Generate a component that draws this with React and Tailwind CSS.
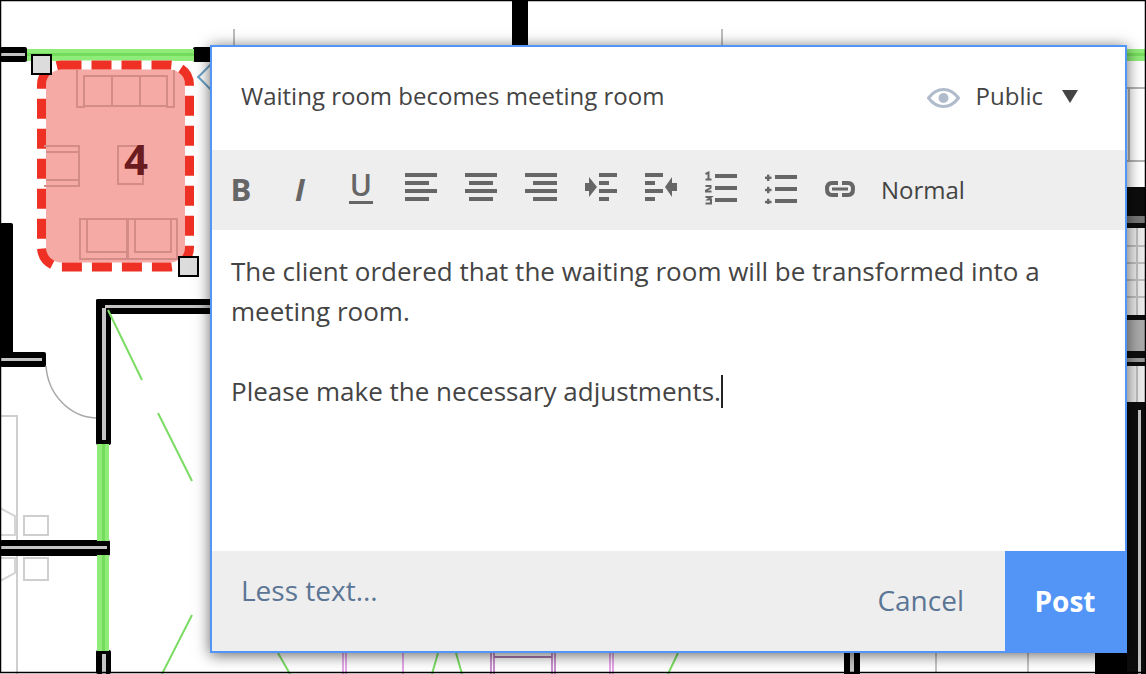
const FONT = "font-['Open_Sans',sans-serif]"

// Floor plan behind the popup
function FloorPlan() {
  return (
    <svg className="absolute inset-0" width="1146" height="674" viewBox="0 0 1146 674">
      <rect width="1146" height="674" fill="#fff" />

      {/* thin lines */}
      <g stroke="#a8a8a8" strokeWidth="1.5" fill="none">
        <path d="M234 29V47M722 29V47" />
        <path d="M46 366C48 395 70 417 96 418" />
        <path d="M1 416H17V674" stroke="#cfcfcf" strokeWidth="2" />
        <path d="M24 516H48V535H24ZM24 558H48V580H24Z" stroke="#cfcfcf" strokeWidth="2" />
        <path d="M0 508L15 516V535H0M0 581L15 573V558H0" stroke="#d5d5d5" strokeWidth="2" />
        <path d="M936 653V672M1028 653V672" stroke="#c4c4c4" strokeWidth="2" />
        <path d="M1127 88H1146M1127 161H1146M1129 88V161" stroke="#b4b4b4" strokeWidth="2" />
      </g>

      {/* walls */}
      <g fill="#000">
        <rect x="512" y="0" width="16" height="46" />
        <rect x="0" y="47" width="27" height="15" rx="2" />
        <rect x="193" y="47" width="20" height="15" rx="2" />
        <rect x="0" y="223" width="13" height="132" rx="2" />
        <rect x="0" y="352" width="46" height="15" rx="2" />
        <rect x="96" y="299" width="120" height="15" rx="2" />
        <rect x="96" y="299" width="15" height="146" rx="2" />
        <rect x="0" y="540" width="110" height="16" rx="2" />
        <rect x="96" y="650" width="15" height="24" rx="2" />
        <rect x="844" y="653" width="16" height="21" />
        <rect x="1095" y="640" width="51" height="34" />
        <rect x="1127" y="187" width="19" height="487" fill="#0d0d0d" />
      </g>
      <g fill="#c4c4c4">
        <rect x="0" y="53" width="25" height="3" />
        <rect x="0" y="358" width="42" height="3" />
        <rect x="105" y="305" width="110" height="3" />
        <rect x="102" y="308" width="4" height="132" />
        <rect x="0" y="546" width="107" height="3" />
        <rect x="102" y="654" width="4" height="20" />
        <rect x="850" y="653" width="4" height="20" />
        <rect x="1138" y="410" width="3" height="264" />
      </g>

      {/* windows */}
      <g fill="#8fec78">
        <rect x="27" y="49" width="167" height="12" />
        <rect x="1120" y="49" width="26" height="12" />
        <rect x="97" y="444" width="12" height="97" />
        <rect x="97" y="555" width="12" height="96" />
      </g>
      <g fill="#74dc5c">
        <rect x="27" y="53" width="167" height="3" />
        <rect x="1120" y="53" width="26" height="3" />
        <rect x="102" y="444" width="3" height="97" />
        <rect x="102" y="555" width="3" height="96" />
      </g>
      <g stroke="#7bdc63" strokeWidth="2" fill="none">
        <path d="M108 310L142 380M158 413L192 481M192 615L162 674" />
        <path d="M278 653L290 674M438 653L432 674M456 653L462 674M678 653L668 674" />
      </g>

      {/* right edge */}
      <rect x="1127" y="216" width="19" height="7" fill="#777" />
      <g fill="#eaeaea">
        <rect x="1127" y="228" width="19" height="87" />
        <rect x="1127" y="366" width="19" height="36" />
      </g>
      <g fill="#bdbdbd">
        <rect x="1127" y="245" width="19" height="2" />
        <rect x="1127" y="262" width="19" height="2" />
        <rect x="1127" y="279" width="19" height="2" />
        <rect x="1127" y="296" width="19" height="2" />
        <rect x="1136" y="228" width="2" height="87" />
        <rect x="1127" y="320" width="19" height="31" fill="#a9a9a9" />
        <rect x="1127" y="358" width="19" height="4" fill="#999" />
        <rect x="1136" y="366" width="2" height="36" />
      </g>

      {/* purple room at the bottom */}
      <g stroke="#e6a5ea" strokeWidth="2" fill="none">
        <path d="M343 653V674M346 653V674M403 653V674M610 653V674M613 653V674" />
        <path d="M491 653V674M494 653V674M552 653V674M555 653V674" stroke="#c98fcf" />
        <path d="M494 657H552" stroke="#a978ad" />
      </g>

      {/* highlighted area */}
      <rect x="41.5" y="65" width="148" height="202" rx="20" fill="#f6aaa5" stroke="#fff" strokeWidth="9" />
      <rect x="41.5" y="65" width="148" height="202" rx="20" fill="none" stroke="#ee3124" strokeWidth="9" strokeDasharray="20 10" />
      <g stroke="#d48c88" strokeWidth="2" fill="none">
        <path d="M77 70V107H84V76H167V107H174V70" />
        <path d="M84 106H167M112 76V106M140 76V106" />
        <path d="M44 146H79V186H44M46 152H79V180H46" />
        <path d="M118 146H143V184H118Z" />
        <path d="M80 219H127V259H80ZM87 219V252H127" />
        <path d="M128 219H177V259H128ZM135 219V252H171V219" />
      </g>
      <text x="136" y="175" textAnchor="middle" fontSize="42" fontWeight="700" fill="#6b1c20" fontFamily="'Open Sans', sans-serif">4</text>

      {/* resize handles */}
      <rect x="32" y="55" width="19" height="19" fill="#dcdcdc" stroke="#000" strokeWidth="2" />
      <rect x="179" y="257" width="19" height="19" fill="#dcdcdc" stroke="#000" strokeWidth="2" />

      {/* outer frame */}
      <rect x="0.500" y="0.500" width="1145" height="672" fill="none" stroke="#000" strokeWidth="1.500" />
    </svg>
  )
}

function LinesIcon({ rows }) {
  return (
    <svg width="32" height="32" viewBox="0 0 32 32" fill="#666">
      {rows.map(([x, w], i) => (
        <rect key={i} x={x} y={1 + i * 8} width={w} height="4" />
      ))}
    </svg>
  )
}

function IndentIcon() {
  return (
    <svg width="32" height="32" viewBox="0 0 32 32" fill="#666">
      <path d="M0 11H4V5L12 15L4 25V19H0Z" />
      <rect x="14" y="1" width="18" height="4" />
      <rect x="14" y="9" width="10" height="4" />
      <rect x="14" y="17" width="18" height="4" />
      <rect x="14" y="25" width="10" height="4" />
    </svg>
  )
}

function OutdentIcon() {
  return (
    <svg width="32" height="32" viewBox="0 0 32 32" fill="#666">
      <path d="M32 11H27V5L20 15L27 25V19H32Z" />
      <rect x="0" y="1" width="18" height="4" />
      <rect x="0" y="9" width="10" height="4" />
      <rect x="0" y="17" width="18" height="4" />
      <rect x="0" y="25" width="10" height="4" />
    </svg>
  )
}

function OrderedIcon() {
  return (
    <svg width="32" height="34" viewBox="0 0 32 34" fill="none" className="overflow-visible">
      <g stroke="#666" strokeWidth="2">
        <path d="M0.500 3L3.500 1.500V8M0.500 8.500H6.500" />
        <path d="M0.500 15H5.500V17L1 19.500V20.500H6.500" />
        <path d="M0.500 26H6L3 28.500H6V32.500H0.500" />
      </g>
      <g fill="#666">
        <rect x="10" y="3" width="22" height="4" />
        <rect x="10" y="15" width="22" height="4" />
        <rect x="10" y="27" width="22" height="4" />
      </g>
    </svg>
  )
}

function BulletIcon() {
  return (
    <svg width="32" height="32" viewBox="0 0 32 32" fill="#666">
      {[5.8, 18, 30].map((cy) => (
        <g key={cy}>
          <rect x="0" y={cy - 1.2} width="6.500" height="2.400" />
          <rect x="2" y={cy - 3.200} width="2.400" height="6.400" />
        </g>
      ))}
      <rect x="10" y="3" width="22" height="4" />
      <rect x="10" y="15" width="22" height="4" />
      <rect x="10" y="27" width="22" height="4" />
    </svg>
  )
}

function LinkIcon() {
  return (
    <svg width="32" height="32" viewBox="0 0 32 32" fill="none" stroke="#666" strokeWidth="4">
      <path d="M13 11H7C3.500 11 2 13 2 17C2 21 3.500 23 7 23H13" />
      <path d="M17 11H23C26.500 11 28 13 28 17C28 21 26.500 23 23 23H17" />
      <rect x="7" y="15.500" width="16" height="3" fill="#666" stroke="none" />
    </svg>
  )
}

const ALIGN_LEFT = [[0, 32], [0, 24], [0, 32], [0, 24]]
const ALIGN_CENTER = [[0, 32], [4, 24], [0, 32], [4, 24]]
const ALIGN_RIGHT = [[0, 32], [8, 24], [0, 32], [8, 24]]

function Toolbar() {
  const cell = 'w-8 h-8 flex items-center justify-center shrink-0'
  return (
    <div className="h-20 bg-[#eee] flex items-center gap-7 pl-[13px] pr-4 pb-1">
      <span className={`${cell} text-[#666] text-[31px] font-bold mt-[2px]`}>B</span>
      <span className={`${cell} text-[#666] text-[31px] font-bold italic mt-[2px] -translate-x-px`}>I</span>
      <span className={`${cell} flex-col -mt-[1px]`}>
        <span className="text-[#666] text-[30px] leading-[26px] font-semibold">U</span>
        <span className="w-6 h-1 bg-[#666] mt-[3px]" />
      </span>
      <span className={cell}><LinesIcon rows={ALIGN_LEFT} /></span>
      <span className={cell}><LinesIcon rows={ALIGN_CENTER} /></span>
      <span className={cell}><LinesIcon rows={ALIGN_RIGHT} /></span>
      <span className={cell}><IndentIcon /></span>
      <span className={cell}><OutdentIcon /></span>
      <span className={cell}><OrderedIcon /></span>
      <span className={cell}><BulletIcon /></span>
      <span className={cell}><LinkIcon /></span>
      <span className="text-[#444] text-[24px] -ml-1 mt-[3px]">Normal</span>
    </div>
  )
}

export default function App() {
  return (
    <div className={`relative w-[1146px] h-[674px] overflow-hidden bg-white ${FONT}`}>
      <FloorPlan />

      {/* callout arrow */}
      <div className="absolute left-[201px] top-[67px] w-5 h-5 rotate-45 bg-white border-l-2 border-b-2 border-[#6ba3c7]" />

      {/* popup */}
      <div className="absolute left-[210px] top-[45px] w-[917px] h-[608px] border-2 border-[#5295f7] bg-white flex flex-col shadow-[0_2px_14px_rgba(0,0,0,0.6)]">
        <div className="h-[103px] flex items-center justify-between pl-[29px] pr-[47px] pb-[5px] text-[#444] text-[24px]">
          <span>Waiting room becomes meeting room</span>
          <span className="flex items-center">
            <svg width="33" height="20" viewBox="0 0 33 20" className="mr-4 mt-[3px]">
              <path d="M1.500 10C6 4 11 1.500 16.500 1.500C22 1.500 27 4 31.500 10C27 16 22 18.500 16.500 18.500C11 18.500 6 16 1.500 10Z" fill="none" stroke="#b0bccb" strokeWidth="3" />
              <circle cx="16.500" cy="10" r="5" fill="#b0bccb" />
            </svg>
            Public
            <span className="ml-[19px] w-0 h-0 border-x-8 border-x-transparent border-t-[13px] border-t-[#444]" />
          </span>
        </div>

        <Toolbar />

        <div className="flex-1 px-[19px] pt-[21px] text-[#444] text-[26px] leading-[40px]">
          <p>The client ordered that the waiting room will be transformed into a meeting room.</p>
          <p className="mt-10 flex items-center">
            Please make the necessary adjustments.
            <span className="inline-block w-[2px] h-[33px] bg-[#222]" />
          </p>
        </div>

        <div className="h-[100px] bg-[#eee] flex text-[#5b7595] text-[28px]">
          <span className="pl-[29px] pt-[18px]">Less text...</span>
          <span className="ml-auto self-center pr-[41px] pb-[3px]">Cancel</span>
          <div className="w-[122px] -mb-[2px] -mr-[2px] bg-[#5295f7] text-white font-bold flex items-center justify-center pb-[3px] pr-[2px]">Post</div>
        </div>
      </div>
    </div>
  )
}
